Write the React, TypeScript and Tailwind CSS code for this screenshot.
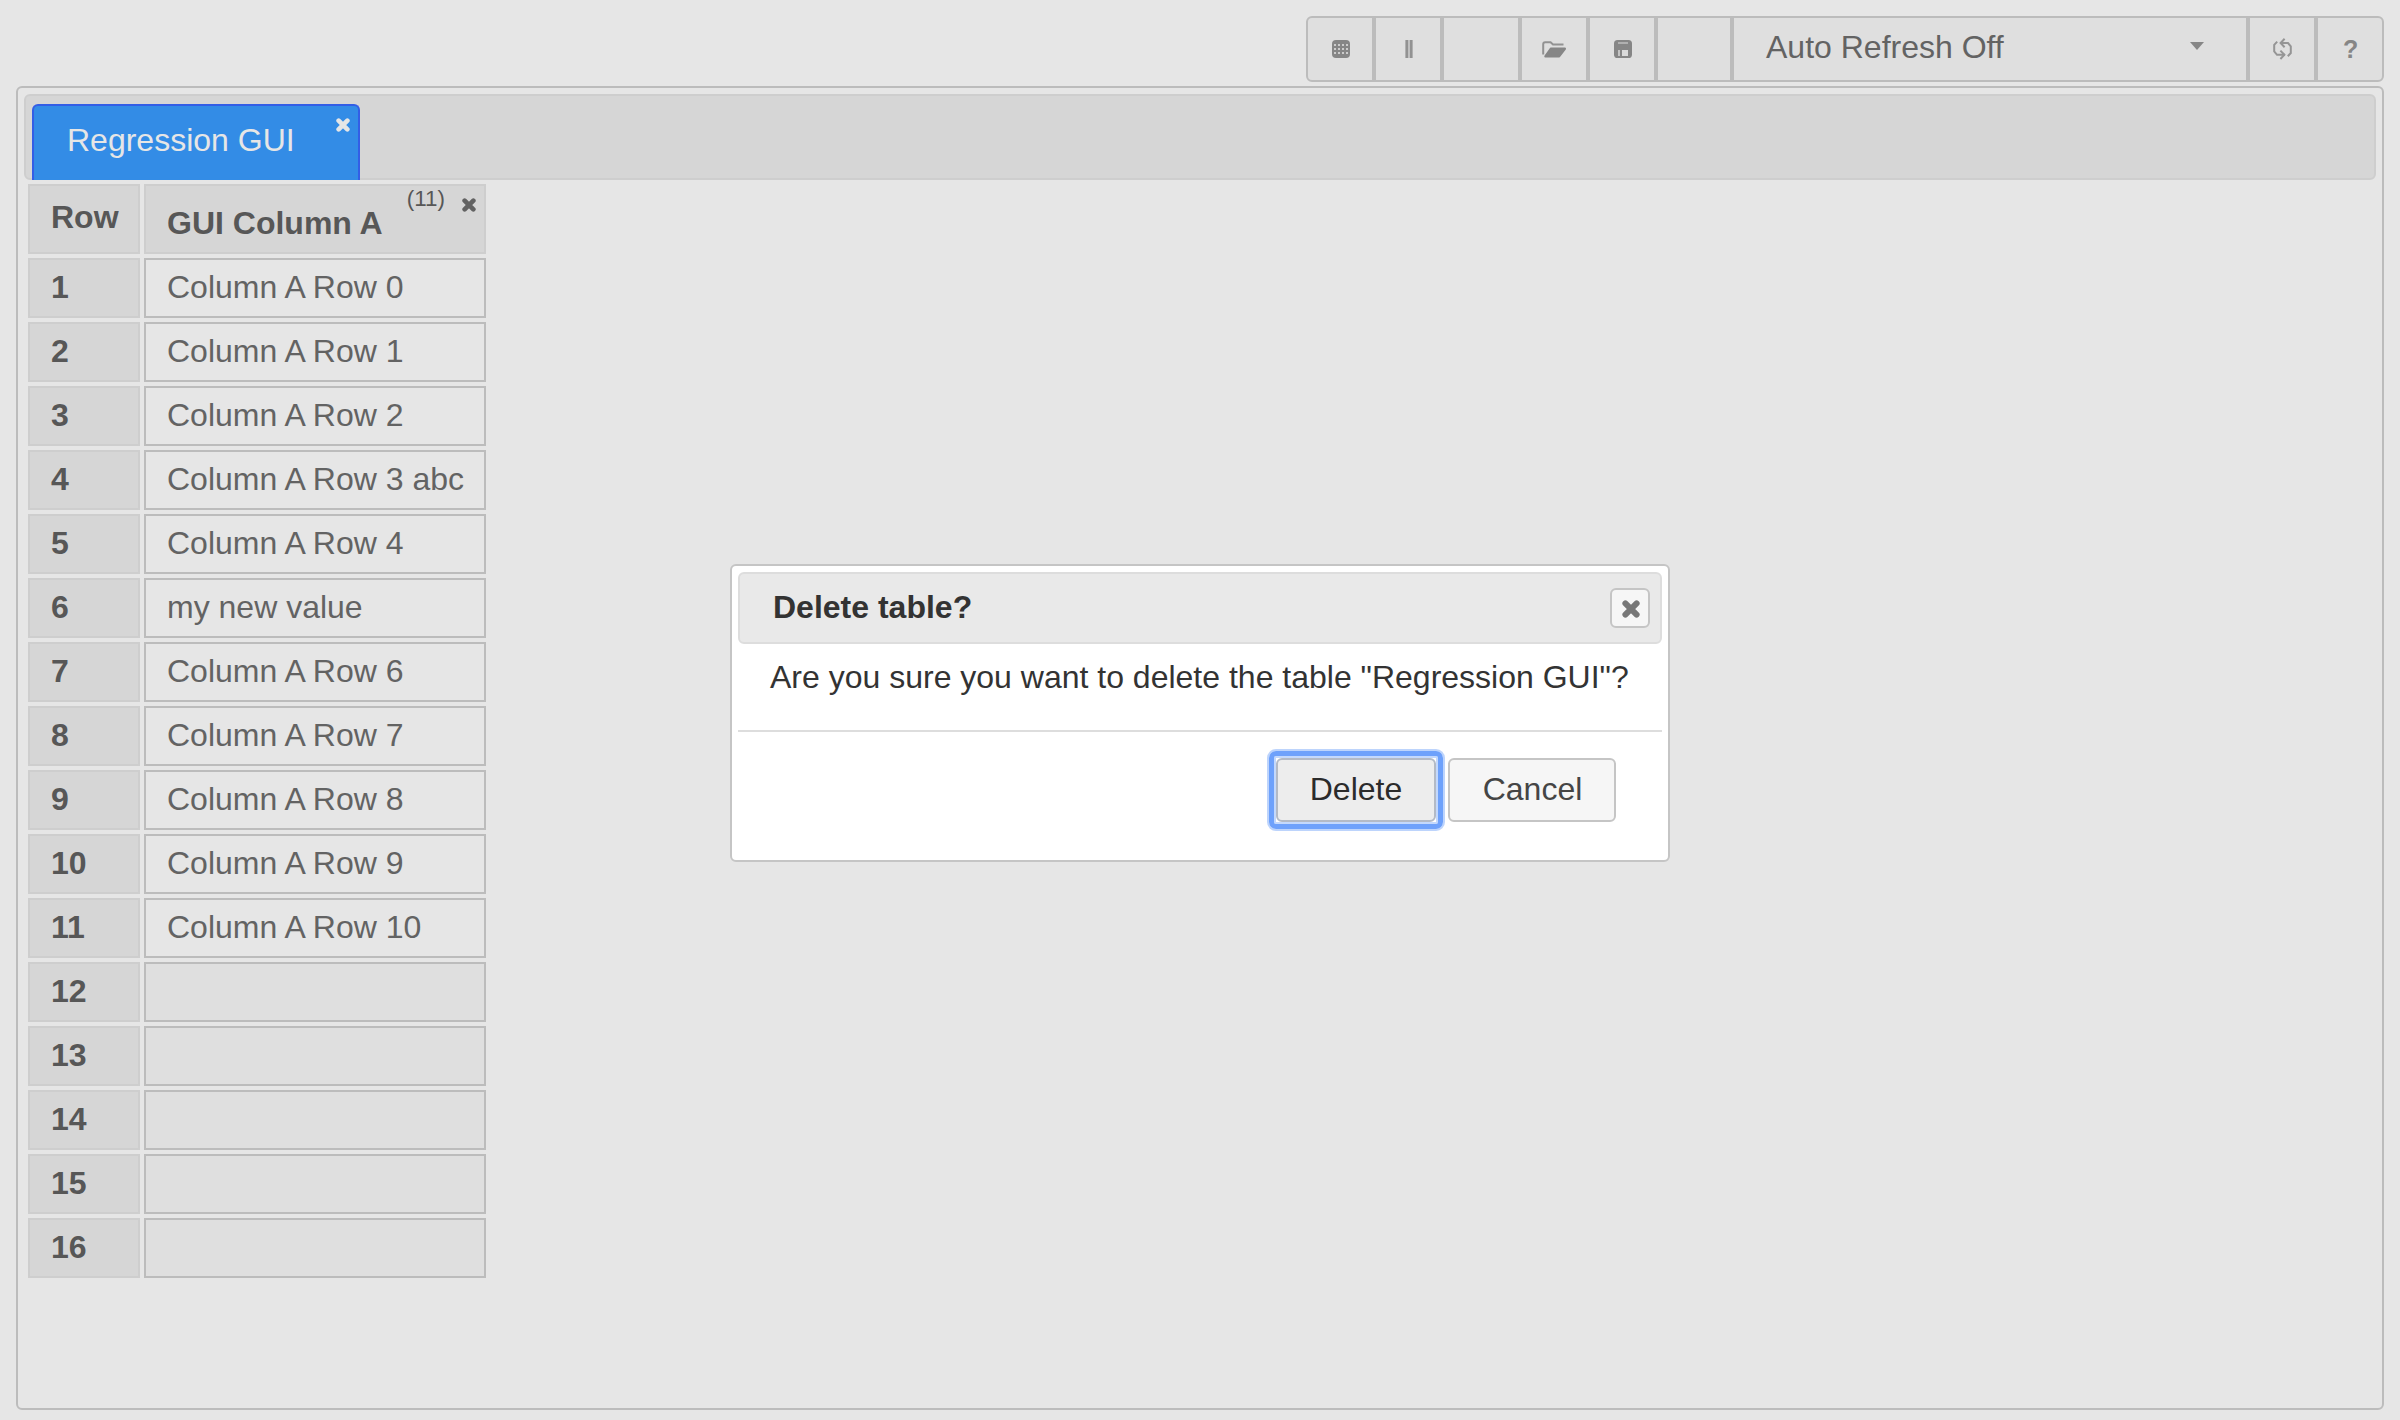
import type { ReactNode } from "react";

const rows = [
  "Column A Row 0",
  "Column A Row 1",
  "Column A Row 2",
  "Column A Row 3 abc",
  "Column A Row 4",
  "my new value",
  "Column A Row 6",
  "Column A Row 7",
  "Column A Row 8",
  "Column A Row 9",
  "Column A Row 10",
  "",
  "",
  "",
  "",
  "",
];

function CloseIcon({ className }: { className: string }) {
  return (
    <svg viewBox="0 0 18 18" className={className} stroke="currentColor" strokeWidth="6" strokeLinecap="round">
      <path d="M3.4 3.4L14.6 14.6M14.6 3.4L3.4 14.6" />
    </svg>
  );
}

function TableIcon() {
  return (
    <svg width="18" height="18" viewBox="0 0 18 18">
      <rect width="18" height="18" rx="4" fill="#868686" />
      {[4, 8, 12].map((y) =>
        [2, 6, 10, 14].map((x) => <rect key={`${x}-${y}`} x={x} y={y} width="2" height="2" fill="#cccccc" />),
      )}
    </svg>
  );
}

function PauseIcon() {
  return (
    <svg width="8" height="18" viewBox="0 0 8 18" fill="#929292">
      <rect x="0.4" width="3" height="18" />
      <rect x="4.6" width="3" height="18" />
    </svg>
  );
}

function FolderIcon() {
  return (
    <svg width="24" height="17" viewBox="0 0 24 17">
      <path d="M1.2 13.5V3.2Q1.2 1.2 3.2 1.2H8.6L11 3.4H21.5" fill="none" stroke="#929292" strokeWidth="2" />
      <path d="M9 6.4H23.2Q24.4 7 23.8 8.4L18.4 15.4Q17.6 16.6 16 16.6H3.4Q1.6 16.4 2.6 14.4L7.4 7.8Q8 6.4 9 6.4Z" fill="#868686" />
    </svg>
  );
}

function DiskIcon() {
  return (
    <svg width="18" height="18" viewBox="0 0 18 18">
      <rect width="18" height="18" rx="3.6" fill="#868686" />
      <rect x="4" y="2" width="10" height="2" fill="#b0b0b0" />
      <rect x="4" y="10" width="2" height="6" fill="#c4c4c4" />
      <rect x="8" y="10" width="6" height="6" fill="#dadada" />
    </svg>
  );
}

function RefreshIcon() {
  return (
    <svg width="19" height="22" viewBox="0 0 19 22" fill="none" stroke="#959595" strokeWidth="2">
      <path d="M4.2 3.6L1.2 6.8V13.4L4 16.8H12" />
      <path d="M7.4 12.6L11.4 16.8L7.4 21" />
      <path d="M14.8 18.2L17.8 15V8.4L15 5H7" />
      <path d="M11.6 0.8L7.6 5L11.6 9.2" />
    </svg>
  );
}

function ToolButton({ className, children }: { className: string; children?: ReactNode }) {
  return (
    <div className={`flex h-[66px] items-center border-2 border-[#bcbcbc] bg-[#dfdfdf] ${className}`}>{children}</div>
  );
}

function Toolbar() {
  return (
    <div className="flex justify-end">
      <ToolButton className="w-[68px] rounded-l-md pl-6">
        <TableIcon />
      </ToolButton>
      <ToolButton className="w-[68px] pl-[29px]">
        <PauseIcon />
      </ToolButton>
      <ToolButton className="w-[78px]" />
      <ToolButton className="w-[68px] pl-5">
        <FolderIcon />
      </ToolButton>
      <ToolButton className="w-[68px] pl-6">
        <DiskIcon />
      </ToolButton>
      <ToolButton className="w-[76px]" />
      <ToolButton className="w-[516px] justify-between pr-[42px] pb-1 pl-8 text-[#636363]">
        <span>Auto Refresh Off</span>
        <svg width="14" height="8" viewBox="0 0 14 8" fill="#868686" className="mt-[-2px]">
          <path d="M0 0H14L7 8Z" />
        </svg>
      </ToolButton>
      <ToolButton className="w-[68px] pl-[23px]">
        <RefreshIcon />
      </ToolButton>
      <ToolButton className="w-[68px] rounded-r-md pl-[25px]">
        <span className="text-[25px] leading-none font-bold text-[#868686]">?</span>
      </ToolButton>
    </div>
  );
}

function DataTable() {
  return (
    <div className="mt-1 ml-1 grid w-fit grid-cols-[112px_342px] gap-1">
      <div className="flex h-[70px] items-center border-2 border-[#cecece] bg-[#d6d6d6] pb-[5px] pl-[21px] font-bold text-[#575757]">
        Row
      </div>
      <div className="flex h-[70px] border-2 border-[#cecece] bg-[#d6d6d6] pl-[21px] text-[#575757]">
        <span className="mt-[19px] leading-9 font-bold whitespace-nowrap">GUI Column A</span>
        <span className="mt-px ml-6 text-[22.4px] leading-6">(11)</span>
        <CloseIcon className="mt-[12px] mr-2 ml-auto size-[14px] text-[#626262]" />
      </div>
      {rows.map((value, i) => (
        <div key={i} className="contents">
          <div className="flex h-[60px] items-center border-2 border-[#cecece] bg-[#d6d6d6] pb-[2px] pl-[21px] font-bold text-[#575757]">
            {i + 1}
          </div>
          <div
            className={`flex h-[60px] items-center border-2 border-[#bcbcbc] pb-[2px] pl-[21px] whitespace-nowrap text-[#636363] ${
              value ? "bg-[#e6e6e6]" : "bg-[#dfdfdf]"
            }`}
          >
            {value}
          </div>
        </div>
      ))}
    </div>
  );
}

function DeleteDialog() {
  return (
    <div className="absolute top-[564px] left-[730px] flex h-[298px] w-[940px] flex-col rounded-md border-2 border-[#c5c5c5] bg-white p-1.5 text-[#333333]">
      <div className="flex h-[72px] items-center justify-between rounded-md border-2 border-[#dddddd] bg-[#e9e9e9] pr-2.5 pl-[33px]">
        <span className="pb-[3px] font-bold">Delete table?</span>
        <button className="flex size-10 items-center justify-center rounded-md border-2 border-[#c5c5c5] bg-[#f6f6f6] text-[#777777]">
          <CloseIcon className="mt-0.5 ml-0.5 size-[18px]" />
        </button>
      </div>
      <p className="mt-[15px] pl-8 leading-9 whitespace-nowrap">
        Are you sure you want to delete the table "Regression GUI"?
      </p>
      <div className="mt-[35px] flex justify-end gap-3 border-t-2 border-[#dddddd] pt-[26px] pr-[46px]">
        <button className="relative h-16 w-40 rounded-md border-2 border-[#b3bac6] bg-[#ededed] pb-[2px] text-[#2b2b2b] before:absolute before:-inset-[9px] before:rounded-[7px] before:border-[5px] before:border-[#6ea1fb] before:shadow-[0_0_0_2px_#bdd4fc,inset_0_0_0_2px_#c3d8fc]">
          Delete
        </button>
        <button className="h-16 w-[168px] rounded-md border-2 border-[#c5c5c5] bg-[#f6f6f6] pb-[2px] pl-px text-[#454545]">
          Cancel
        </button>
      </div>
    </div>
  );
}

export default function App() {
  return (
    <div className="relative flex h-[1420px] w-[2400px] flex-col gap-1 bg-[#e6e6e6] px-4 pt-4 pb-2.5 font-['Liberation_Sans',Arial,sans-serif] text-[32px] leading-9">
      <Toolbar />
      <div className="flex-1 rounded-md border-2 border-[#bcbcbc] p-1.5">
        <div className="flex h-[86px] items-end rounded-md border-2 border-[#cecece] bg-[#d6d6d6] pl-1.5">
          <div className="mb-[-2px] flex h-[76px] w-[328px] justify-between rounded-t-md border-2 border-b-0 border-[#335ee6] bg-[#338ce6] pr-2 pl-[33px] text-[#e6e6e6]">
            <span className="mt-4">Regression GUI</span>
            <CloseIcon className="mt-3 size-[14px]" />
          </div>
        </div>
        <DataTable />
      </div>
      <DeleteDialog />
    </div>
  );
}
